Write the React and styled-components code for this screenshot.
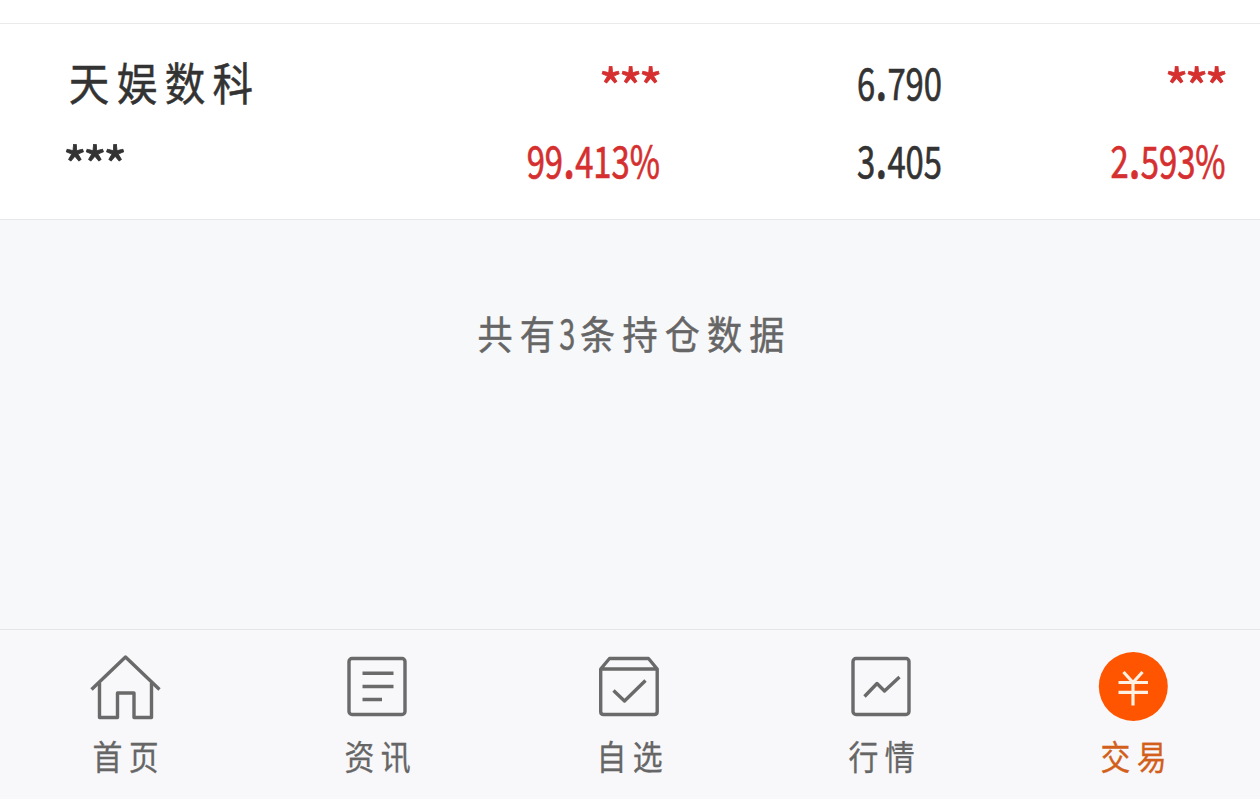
import React from "react";
import styled, { createGlobalStyle } from "styled-components";

const tabs = [
  { label: "首页", icon: HomeIcon },
  { label: "资讯", icon: NewsIcon },
  { label: "自选", icon: PickIcon },
  { label: "行情", icon: MarketIcon },
  { label: "交易", icon: TradeIcon, active: true },
];

function HomeIcon() {
  return (
    <Icon viewBox="0 0 72 72">
      <path d="M1.5 37.5 L35.5 5 L69.5 37.5" />
      <path d="M9.5 31 V65.5 H27.5 V41 H44 V65.5 H61.5 V31" />
    </Icon>
  );
}

function NewsIcon() {
  return (
    <Icon viewBox="0 0 72 72">
      <rect x="7" y="6.5" width="56" height="56" rx="3" />
      <path d="M20.5 21.3 H51.5 M20.5 34.5 H51.5 M20.5 47.5 H40" />
    </Icon>
  );
}

function PickIcon() {
  return (
    <Icon viewBox="0 0 72 72">
      <path d="M6.7 17 V59.5 Q6.7 62.5 9.7 62.5 H60.2 Q63.2 62.5 63.2 59.5 V17 L54.5 6.5 H15.5 L6.7 17 H63.2" />
      <path d="M19.5 38.5 L30.5 49 L51.5 28.5" />
    </Icon>
  );
}

function MarketIcon() {
  return (
    <Icon viewBox="0 0 72 72">
      <rect x="7" y="6.5" width="56" height="56" rx="3" />
      <path d="M18.5 44.5 L31 31.5 L38.5 39 L53.5 25" />
    </Icon>
  );
}

function TradeIcon() {
  return (
    <Icon viewBox="0 0 72 72">
      <circle cx="35.3" cy="34.5" r="34.5" fill="#ff5500" stroke="none" />
      <g stroke="#fff0e4" strokeWidth="3.2">
        <path d="M25.5 20 L35 30.5 L44.5 20 M35 30.5 V53.5 M20.5 30.5 H50 M20.5 40.3 H50" />
      </g>
    </Icon>
  );
}

function Figure({ value, up }) {
  const [whole, decimals] = value.split(".");
  return (
    <Num $up={up}>
      {whole}
      <Dot>.</Dot>
      {decimals}
    </Num>
  );
}

function App() {
  return (
    <>
      <GlobalStyle />
      <Page>
        <Strip />
        <Holding>
          <Name>天娱数科</Name>
          <Stars $up>***</Stars>
          <Figure value="6.790" />
          <Stars $up>***</Stars>
          <Stars $left>***</Stars>
          <Figure value="99.413%" up />
          <Figure value="3.405" />
          <Figure value="2.593%" up />
        </Holding>
        <Summary>
          <Total>
            共<Tight>有</Tight>
            <Count>3</Count>条持仓数据
          </Total>
        </Summary>
        <TabBar>
          {tabs.map(({ label, icon: TabIcon, active }) => (
            <Tab key={label}>
              <TabIcon />
              <Label $active={active}>{label}</Label>
            </Tab>
          ))}
        </TabBar>
      </Page>
    </>
  );
}

const GlobalStyle = createGlobalStyle`
  * {
    box-sizing: border-box;
  }
  body {
    margin: 0;
    background: #f7f8fa;
    font-family: "Noto Sans CJK SC", sans-serif;
  }
`;

const Page = styled.div`
  display: flex;
  flex-direction: column;
  height: 799px;
  overflow: hidden;
  background: #f7f8fa;
`;

const Strip = styled.div`
  height: 24px;
  flex: none;
  background: #fff;
  border-bottom: 1px solid #e9eaec;
`;

const Holding = styled.div`
  display: grid;
  grid-template-columns: 300px 294px 282px 284px;
  grid-template-rows: 78px 78px;
  flex: none;
  height: 196px;
  padding: 18px 34px 0 66px;
  background: #fff;
  border-bottom: 1px solid #e6e7ea;
`;

const Name = styled.div`
  justify-self: start;
  padding: 1px 0 0 3px;
  font-size: 45px;
  line-height: 78px;
  letter-spacing: 8.3px;
  white-space: nowrap;
  color: #333;
  -webkit-text-stroke: 0.5px currentColor;
  transform: scaleX(0.9);
  transform-origin: left;
`;

/* condensed figures, squeezed from the edge they are aligned to */
const Num = styled.div`
  justify-self: end;
  font-size: 44px;
  line-height: 78px;
  white-space: nowrap;
  color: ${(props) => (props.$up ? "#d52f2f" : "#333")};
  -webkit-text-stroke: 0.7px currentColor;
  transform: scaleX(0.745);
  transform-origin: right;
`;

const Dot = styled.span`
  margin: 0 1px;
  font-weight: 700;
`;

const Stars = styled(Num)`
  justify-self: ${(props) => (props.$left ? "start" : "end")};
  margin: ${(props) => (props.$left ? "0 0 0 -3px" : "0 1px 0 0")};
  padding-top: 4px;
  font-size: 51px;
  letter-spacing: -3.7px;
  -webkit-text-stroke: 0.8px currentColor;
  transform: none;
`;

const Summary = styled.div`
  flex: 1;
  display: flex;
  justify-content: center;
  padding: 82px 0 0 9px;
`;

const Total = styled.div`
  height: 58px;
  font-size: 39px;
  line-height: 58px;
  letter-spacing: 8px;
  white-space: nowrap;
  color: #666;
  -webkit-text-stroke: 0.5px currentColor;
  transform: scaleX(0.9);
`;

const Tight = styled.span`
  letter-spacing: 5px;
`;

const Count = styled.span`
  display: inline-block;
  width: 23px;
  font-size: 41px;
  letter-spacing: 0;
  transform: scaleX(0.78);
  transform-origin: left;
`;

const TabBar = styled.nav`
  display: grid;
  grid-template-columns: repeat(5, 1fr);
  flex: none;
  height: 170px;
  border-top: 1px solid #e4e5e8;
  background: #f8f8fb;
`;

const Tab = styled.div`
  display: flex;
  flex-direction: column;
  align-items: center;
  padding-top: 22px;
`;

const Icon = styled.svg`
  width: 72px;
  height: 72px;
  fill: none;
  stroke: #6a6a6a;
  stroke-width: 3.4;
  stroke-linejoin: round;
`;

const Label = styled.span`
  margin-top: 7px;
  padding-left: 6px;
  font-size: 34px;
  line-height: 50px;
  letter-spacing: 7px;
  color: ${(props) => (props.$active ? "#d2601a" : "#666")};
  -webkit-text-stroke: 0.3px currentColor;
  transform: scaleX(0.88);
`;

export default App;
